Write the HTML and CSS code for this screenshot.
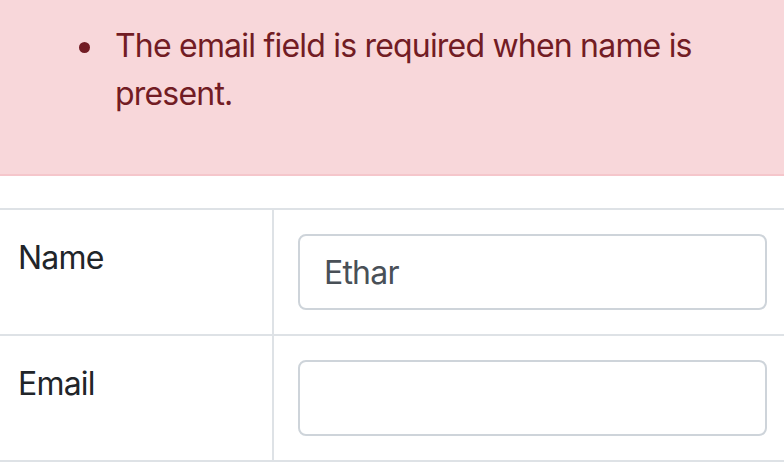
FILE: index.html
```html
<!DOCTYPE html>
<html lang="en">
<head>
    <meta charset="UTF-8">
    <title>Contact form</title>
    <meta name="viewport" content="width=device-width, initial-scale=1">
    <link rel="stylesheet" href="styles.css">
</head>
<body>
<div class="page">
    <div class="alert alert-danger">
        <ul>
            <li>The email field is required when name is present.</li>
        </ul>
    </div>

    <table class="form-table">
        <tr>
            <td class="label-cell">Name</td>
            <td><input type="text" class="form-control" value="Ethar"></td>
        </tr>
        <tr>
            <td class="label-cell">Email</td>
            <td><input type="email" class="form-control" value=""></td>
        </tr>
    </table>
</div>
</body>
</html>
```

FILE: styles.css
```css
body {
    font-family: Inter, "Noto Sans", sans-serif;
    font-size: 32px;
    line-height: 48px;
    letter-spacing: -0.8px;
    color: #212529;
    background: white;
    margin: 0;
}
.page {
    margin: -4px -9px 0 -8px;
}
.alert {
    padding: 24px 40px;
    margin-bottom: 32px;
    border: 2px solid transparent;
}
.alert-danger {
    color: #721c24;
    background: #f8d7da;
    border-color: #f5c6cb;
}
.alert ul {
    margin: 0 0 32px 0;
    padding-left: 81px;
    list-style: none;
}
.alert li::before {
    content: "";
    display: inline-block;
    width: 11px;
    height: 11px;
    border-radius: 50%;
    background: currentColor;
    margin-left: -36px;
    margin-right: 25px;
    vertical-align: 4px;
}
.form-table {
    width: 100%;
    border-collapse: collapse;
}
.form-table td {
    border: 2px solid #dee2e6;
    padding: 24px;
    vertical-align: top;
}
.label-cell {
    width: 230px;
}
.form-control {
    display: block;
    box-sizing: border-box;
    width: 100%;
    height: 76px;
    padding: 12px 24px;
    font-family: inherit;
    font-size: 32px;
    line-height: 48px;
    letter-spacing: -0.8px;
    color: #495057;
    background: white;
    border: 2px solid #ced4da;
    border-radius: 8px;
    margin: 0;
}
```
